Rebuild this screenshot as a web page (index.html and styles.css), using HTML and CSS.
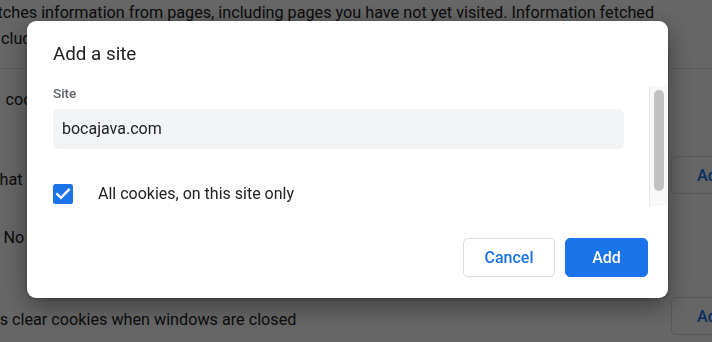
FILE: index.html
```html
<!DOCTYPE html>
<html lang="en">
<head>
<meta charset="utf-8">
<title>Add a site</title>
<link rel="stylesheet" href="styles.css">
</head>
<body>
  <div class="page">
    <p class="desc desc-1">tches information from pages, including pages you have not yet visited. Information fetched</p>
    <p class="desc desc-2">cludes cookies, if you allow cookies</p>
    <div class="divider"></div>
    <div class="row row-cookies"><span class="row-text">cookies for this site</span></div>
    <div class="row row-header">
      <span class="row-text row-text-that">hat can always use cookies</span>
      <button class="bg-btn">Add</button>
    </div>
    <div class="row row-empty"><span class="row-text row-text-no">No sites added</span></div>
    <div class="row row-header row-clear">
      <span class="row-text row-text-clear">s clear cookies when windows are closed</span>
      <button class="bg-btn">Add</button>
    </div>
  </div>

  <div class="overlay">
    <div class="dialog" role="dialog" aria-label="Add a site">
      <div class="dialog-title">Add a site</div>
      <div class="dialog-body">
        <div class="body-content">
          <div class="field-label">Site</div>
          <div class="field-input">bocajava.com</div>
          <div class="check-row">
            <span class="checkbox">
              <svg width="20" height="20" viewBox="0 0 20 20"><path d="M4.2 10.2 L8 13.8 L15.8 5.8" fill="none" stroke="#ffffff" stroke-width="2.4" stroke-linecap="square" stroke-linejoin="miter"/></svg>
            </span>
            <span class="check-label">All cookies, on this site only</span>
          </div>
        </div>
        <div class="scroll-track"><div class="scroll-thumb"></div></div>
      </div>
      <div class="dialog-footer">
        <button class="btn btn-cancel">Cancel</button>
        <button class="btn btn-add">Add</button>
      </div>
    </div>
  </div>
</body>
</html>
```

FILE: styles.css
```css
* { box-sizing: border-box; }

html, body {
  margin: 0;
  padding: 0;
  width: 712px;
  height: 342px;
  overflow: hidden;
  background: #ffffff;
  font-family: Roboto, "Liberation Sans", Arial, sans-serif;
  color: #202124;
}

/* ---------- background settings page ---------- */
.page {
  width: 771px;
  display: flex;
  flex-direction: column;
}

.desc {
  margin: 0;
  font-size: 16.2px;
  line-height: 26px;
  white-space: nowrap;
}
.desc-1 { margin-left: -2.5px; }
.desc-2 { margin-left: 1px; }

.divider {
  margin-top: 16px;
  height: 1px;
  background: #e3e4e6;
}

.row {
  display: flex;
  align-items: flex-start;
  font-size: 16.2px;
  line-height: 20px;
}
.row-text { white-space: nowrap; }

.row-cookies { margin-top: 21px; padding-left: 5.5px; }

.row-header { margin-top: 46px; height: 38px; }
.row-text-that { margin-top: 13.5px; margin-left: -0.5px; }

.row-empty { margin-top: 33.5px; padding-left: 3.5px; }

.row-clear { margin-top: 49.5px; }
.row-text-clear { margin-top: 12.5px; margin-left: -0.3px; }

.bg-btn {
  margin-left: auto;
  width: 100px;
  height: 38px;
  border: 1px solid #dadce0;
  border-radius: 5px;
  background: #ffffff;
  color: #1a73e8;
  font-family: Roboto, "Liberation Sans", Arial, sans-serif;
  font-size: 16.2px;
  font-weight: 500;
  text-align: left;
  padding: 0 0 0 25px;
}

/* ---------- modal ---------- */
.overlay {
  position: fixed;
  inset: 0;
  background: rgba(0, 0, 0, 0.6);
  padding: 21px 0 0 27px;
}

.dialog {
  width: 641px;
  background: #ffffff;
  border-radius: 9px;
  box-shadow: 0 8px 26px rgba(0, 0, 0, 0.4), 0 1px 4px rgba(0, 0, 0, 0.2);
  display: flex;
  flex-direction: column;
}

.dialog-title {
  padding: 21px 26px 0;
  font-size: 18.8px;
  line-height: 25px;
  color: #202124;
  margin-bottom: 19px;
}

.dialog-body {
  display: flex;
  height: 120px;
  overflow: hidden;
  padding-right: 1px;
}

.body-content {
  flex: 1;
  padding: 0 25px 0 26px;
}

.field-label {
  font-size: 13.5px;
  line-height: 14px;
  font-weight: 500;
  color: #5f6368;
}

.field-input {
  margin-top: 9px;
  height: 40px;
  border-radius: 5px;
  background: #f1f3f4;
  padding-left: 9px;
  font-size: 16px;
  line-height: 40px;
  color: #202124;
}

.check-row {
  margin-top: 35px;
  display: flex;
  align-items: center;
  gap: 25px;
}

.checkbox {
  width: 20px;
  height: 20px;
  border-radius: 2.5px;
  background: #1a73e8;
  display: flex;
}

.check-label {
  font-size: 16px;
  line-height: 20px;
  color: #202124;
  margin-top: -1px;
}

.scroll-track {
  width: 18px;
  background: #f8f8f8;
  border-left: 1px solid #e6e6e6;
  padding: 4px 3px 0 4px;
}

.scroll-thumb {
  width: 10px;
  height: 101px;
  border-radius: 5px;
  background: #c1c1c1;
}

.dialog-footer {
  display: flex;
  justify-content: flex-end;
  gap: 10px;
  padding: 32px 20px 21px;
}

.btn {
  height: 39px;
  border-radius: 5px;
  font-family: Roboto, "Liberation Sans", Arial, sans-serif;
  font-size: 16px;
  font-weight: 500;
  padding: 0;
}

.btn-cancel {
  width: 92px;
  background: #ffffff;
  border: 1px solid #dadce0;
  color: #1a73e8;
}

.btn-add {
  width: 83px;
  background: #1a73e8;
  border: 1px solid #1a73e8;
  color: #ffffff;
}
```
